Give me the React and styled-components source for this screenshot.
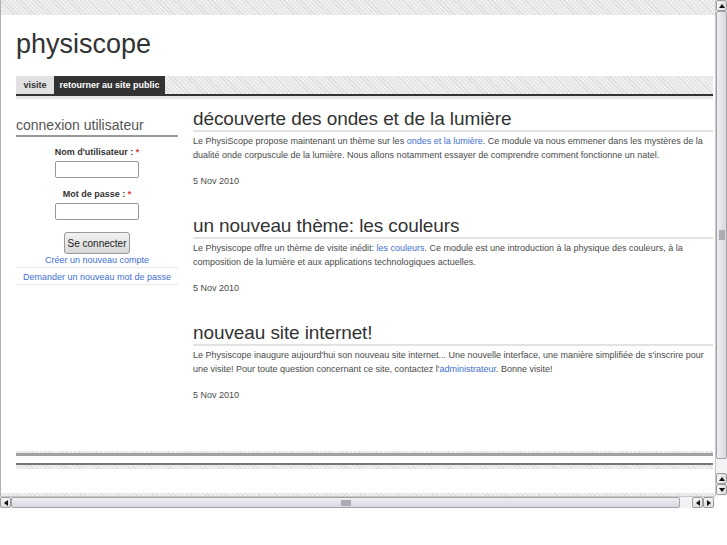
import React from 'react';
import styled, { createGlobalStyle } from 'styled-components';

const GlobalStyle = createGlobalStyle`
  html, body { margin: 0; padding: 0; background: #fff; overflow: hidden; }
  body { font-family: "Liberation Sans", Arial, Helvetica, sans-serif; color: #444; }
  * { box-sizing: border-box; }
`;

const stripes = `repeating-linear-gradient(45deg, #dedede 0 1px, #efefef 1px 3px)`;

const Screen = styled.div`
  width: 727px;
  height: 545px;
  background: #fff;
`;

const Window = styled.div`
  display: grid;
  grid-template-columns: 715px 12px;
  grid-template-rows: 496px 12px;
`;

const Viewport = styled.div`
  display: flex;
  flex-direction: column;
  border-left: 1px solid #b0b0b0;
  overflow: hidden;
`;

const Band = styled.div`
  height: ${p => p.$h}px;
  flex: none;
  background: ${stripes};
`;

const Page = styled.div`
  flex: 1;
  display: flex;
  flex-direction: column;
  padding: 0 2px 24px 15px;
`;

const SiteName = styled.h1`
  margin: 0;
  padding-top: 13px;
  height: 61px;
  font-size: 27px;
  line-height: 32px;
  font-weight: normal;
  color: #333;
`;

const Nav = styled.nav`
  display: flex;
  height: 20px;
  background: ${stripes};
  border-bottom: 2px solid #333;
  box-shadow: 0 3px 0 #e6e6e6;
  margin-bottom: 3px;
`;

const Tab = styled.a`
  display: flex;
  align-items: center;
  justify-content: center;
  width: ${p => p.$w}px;
  font-size: 9px;
  font-weight: bold;
  color: ${p => (p.$active ? '#fff' : '#333')};
  background: ${p => (p.$active ? '#333' : '#e2e2e2')};
  text-decoration: none;
`;

const Columns = styled.div`
  display: grid;
  grid-template-columns: 162px 1fr;
  column-gap: 15px;
  margin-top: 9px;
`;

const Sidebar = styled.aside`
  padding-top: 8px;
`;

const BlockTitle = styled.h2`
  margin: 0;
  font-size: 14px;
  line-height: 18px;
  font-weight: normal;
  color: #555;
  padding-bottom: 1px;
  border-bottom: 2px solid #999;
`;

const Form = styled.form`
  display: flex;
  flex-direction: column;
  align-items: center;
  padding-top: 9px;
`;

const Label = styled.label`
  font-size: 9px;
  line-height: 12px;
  font-weight: bold;
  color: #333;
  margin-top: ${p => p.$mt || 0}px;
`;

const Req = styled.span`
  color: #d33;
`;

const Input = styled.input`
  width: 84px;
  height: 17px;
  margin-top: 3px;
  border: 1px solid #999;
  border-radius: 2px;
  background: #fff;
  padding: 0;
`;

const Button = styled.button`
  margin-top: 12px;
  width: 66px;
  height: 22px;
  font-family: inherit;
  font-size: 10px;
  color: #222;
  border: 1px solid #999;
  border-radius: 3px;
  background: linear-gradient(#f2f2f2, #d8d8d8);
  padding: 0;
`;

const LinkList = styled.div`
  display: flex;
  flex-direction: column;
  align-self: stretch;
`;

const SideLink = styled.a`
  display: block;
  text-align: center;
  font-size: 9px;
  line-height: 12px;
  color: #3f6fcf;
  text-decoration: none;
  padding: ${p => p.$pt || 0}px 0 1px;
  border-bottom: 1px solid #e8e8e8;
`;

const Main = styled.main`
  display: flex;
  flex-direction: column;
`;

const Article = styled.article`
  margin-bottom: ${p => (p.$last ? 0 : 27)}px;
`;

const ArticleTitle = styled.h2`
  margin: 0;
  font-size: 19px;
  line-height: 22px;
  font-weight: normal;
  color: #333;
  border-bottom: 2px solid #e2e2e6;
  letter-spacing: -0.1px;
`;

const Body = styled.p`
  margin: 2px 0 0;
  font-size: 9px;
  line-height: 14px;
  color: #4a4a4a;
`;

const A = styled.a`
  color: #3f6fcf;
  text-decoration: none;
`;

const DateLine = styled.div`
  margin-top: 12px;
  font-size: 9px;
  line-height: 14px;
  color: #4a4a4a;
`;

const Footer = styled.footer`
  margin-top: auto;
  display: flex;
  flex-direction: column;
  gap: 7px;
`;

const FooterTop = styled.div`
  height: 5px;
  background: ${stripes};
  border-bottom: 3px solid #a0a0a0;
`;

const FooterBottom = styled.div`
  height: 6px;
  background: ${stripes};
  border-top: 2px solid #777;
`;

/* scrollbars */
const VScroll = styled.div`
  display: flex;
  flex-direction: column;
  background: #f3f3f5;
  border-left: 1px solid #c8c8c8;
  padding-bottom: 1px;
`;

const HScroll = styled.div`
  display: flex;
  background: #f3f3f5;
  border-top: 1px solid #c8c8c8;
  padding-right: 1px;
`;

const ArrowBtn = styled.div`
  flex: none;
  width: 11px;
  height: 11px;
  display: flex;
  align-items: center;
  justify-content: center;
  border: 1px solid #9c9c9c;
  border-radius: 2px;
  background: linear-gradient(${p => (p.$h ? '#f6f6f6, #dcdcdc' : 'to right, #f6f6f6, #dcdcdc')});
`;

const VTrack = styled.div`
  flex: 1;
  display: flex;
  flex-direction: column;
  padding-bottom: 14px;
`;

const VThumb = styled.div`
  flex: 1;
  display: flex;
  align-items: center;
  justify-content: center;
  border: 1px solid #a4a4a4;
  border-radius: 2px;
  background: linear-gradient(to right, #eceef2, #d7d9df);
`;

const HThumb = styled.div`
  flex: 1;
  display: flex;
  align-items: center;
  justify-content: center;
  margin-right: 12px;
  border: 1px solid #a4a4a4;
  border-radius: 2px;
  background: linear-gradient(#eceef2, #d7d9df);
`;

const Grip = styled.div`
  width: ${p => p.$w}px;
  height: ${p => p.$hgt}px;
  background-image: radial-gradient(circle, #a8a8b0 0.7px, transparent 0.8px);
  background-size: 2px 2px;
`;

const Corner = styled.div`
  background: #fff;
`;

const Arrow = ({ dir }) => {
  const pts = {
    up: '0,4 3,0 6,4',
    down: '0,0 6,0 3,4',
    left: '4,0 4,6 0,3',
    right: '0,0 0,6 4,3',
  }[dir];
  const vertical = dir === 'up' || dir === 'down';
  return (
    <svg width={vertical ? 6 : 4} height={vertical ? 4 : 6} viewBox={vertical ? '0 0 6 4' : '0 0 4 6'}>
      <polygon points={pts} fill="#111" />
    </svg>
  );
};

const articles = [
  {
    title: 'découverte des ondes et de la lumière',
    body: (
      <>
        Le PhysiScope propose maintenant un thème sur les <A href="#">ondes et la lumière</A>. Ce module va nous emmener dans les mystères de la dualité onde corpuscule de la lumière. Nous allons notamment essayer de comprendre comment fonctionne un natel.
      </>
    ),
  },
  {
    title: 'un nouveau thème: les couleurs',
    body: (
      <>
        Le Physiscope offre un thème de visite inédit: <A href="#">les couleurs</A>. Ce module est une introduction à la physique des couleurs, à la composition de la lumière et aux applications technologiques actuelles.
      </>
    ),
  },
  {
    title: 'nouveau site internet!',
    body: (
      <>
        Le Physiscope inaugure aujourd'hui son nouveau site internet... Une nouvelle interface, une manière simplifiée de s'inscrire pour une visite! Pour toute question concernant ce site, contactez l'<A href="#">administrateur</A>. Bonne visite!
      </>
    ),
  },
];

export default function App() {
  return (
    <Screen>
      <GlobalStyle />
      <Window>
        <Viewport>
          <Band $h={15} />
          <Page>
            <SiteName>physiscope</SiteName>
            <Nav>
              <Tab href="#" $w={38}>visite</Tab>
              <Tab href="#" $w={111} $active>retourner au site public</Tab>
            </Nav>
            <Columns>
              <Sidebar>
                <BlockTitle>connexion utilisateur</BlockTitle>
                <Form onSubmit={e => e.preventDefault()}>
                  <Label>Nom d'utilisateur : <Req>*</Req></Label>
                  <Input type="text" />
                  <Label $mt={10}>Mot de passe : <Req>*</Req></Label>
                  <Input type="password" />
                  <Button type="button">Se connecter</Button>
                  <LinkList>
                    <SideLink href="#">Créer un nouveau compte</SideLink>
                    <SideLink href="#" $pt={3}>Demander un nouveau mot de passe</SideLink>
                  </LinkList>
                </Form>
              </Sidebar>
              <Main>
                {articles.map((a, i) => (
                  <Article key={i} $last={i === articles.length - 1}>
                    <ArticleTitle>{a.title}</ArticleTitle>
                    <Body>{a.body}</Body>
                    <DateLine>5 Nov 2010</DateLine>
                  </Article>
                ))}
              </Main>
            </Columns>
            <Footer>
              <FooterTop />
              <FooterBottom />
            </Footer>
          </Page>
          <Band $h={3} />
        </Viewport>
        <VScroll>
          <ArrowBtn><Arrow dir="up" /></ArrowBtn>
          <VTrack>
            <VThumb><Grip $w={6} $hgt={10} /></VThumb>
          </VTrack>
          <ArrowBtn><Arrow dir="up" /></ArrowBtn>
          <ArrowBtn><Arrow dir="down" /></ArrowBtn>
        </VScroll>
        <HScroll>
          <ArrowBtn $h><Arrow dir="left" /></ArrowBtn>
          <HThumb><Grip $w={10} $hgt={6} /></HThumb>
          <ArrowBtn $h><Arrow dir="left" /></ArrowBtn>
          <ArrowBtn $h><Arrow dir="right" /></ArrowBtn>
        </HScroll>
        <Corner />
      </Window>
    </Screen>
  );
}
